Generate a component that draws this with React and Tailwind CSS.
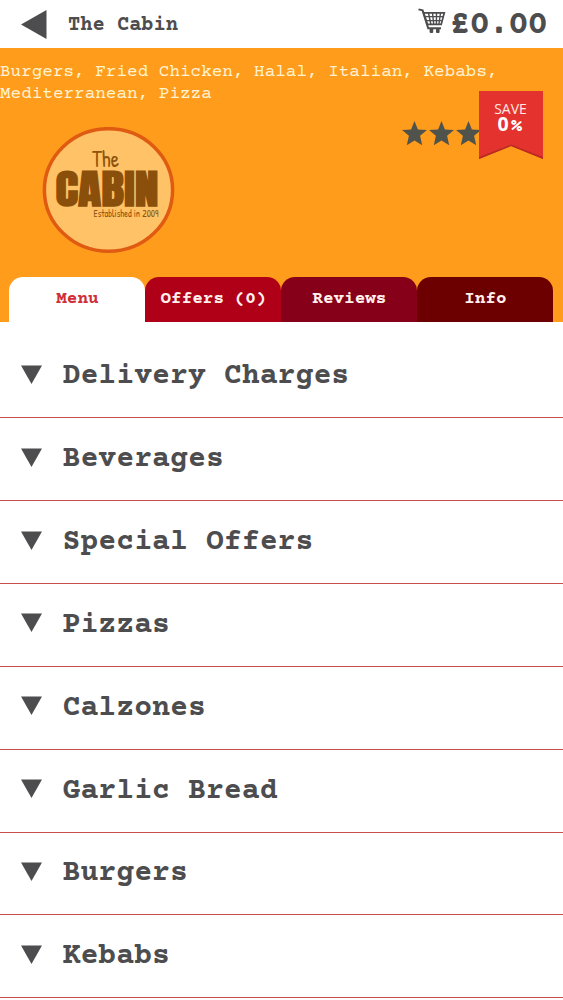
const CATEGORIES = [
  'Delivery Charges',
  'Beverages',
  'Special Offers',
  'Pizzas',
  'Calzones',
  'Garlic Bread',
  'Burgers',
  'Kebabs',
];

const TABS = [
  { label: 'Menu', style: 'bg-white text-[#cf3037]' },
  { label: 'Offers (0)', style: 'bg-[#b00018] text-[#fff0ec]' },
  { label: 'Reviews', style: 'bg-[#870019] text-[#fff0ec]' },
  { label: 'Info', style: 'bg-[#6c0000] text-[#fff0ec]' },
];

function Cart() {
  return (
    <svg className="h-[26px] w-7 shrink-0" viewBox="0 0 28 26" fill="none" stroke="#4d4d4f">
      <path d="M0.5 1.4 L4.6 2.4 L10.2 20.2 H23" strokeWidth="2" />
      <path d="M5.6 4.8 H26.3 L23.2 16.4 H9.4 Z" strokeWidth="1.7" />
      <path d="M7.3 8.6 H25 M8.4 12.6 H23.8 M10.5 5 L13 17 M14.5 5 L15.8 17 M18.5 5 L18.4 17 M22.5 5 L20.8 17" strokeWidth="1.4" />
      <rect x="11.6" y="20.5" width="3.6" height="4.4" rx="1" fill="#4d4d4f" stroke="none" />
      <rect x="18" y="20.5" width="3.6" height="4.4" rx="1" fill="#4d4d4f" stroke="none" />
    </svg>
  );
}

function Star() {
  return (
    <svg className="h-[25px] w-[25px] shrink-0" viewBox="0 0 25 25">
      <path
        d="M12.5 0 L15.9 8.4 L25 9.1 L18.1 14.8 L20.2 24.2 L12.5 19.4 L4.8 24.2 L6.9 14.8 L0 9.1 L9.1 8.4 Z"
        fill="#50534b"
      />
    </svg>
  );
}

function Logo() {
  return (
    <svg className="ml-[42px] mt-[25px] h-[128px] w-[134px]" viewBox="0 0 134 128">
      <ellipse cx="66.5" cy="63" rx="64.1" ry="61.3" fill="#ffc266" stroke="#df5b12" strokeWidth="3.5" />
      <text x="50" y="39.5" textLength="27" lengthAdjust="spacingAndGlyphs" fontFamily="'Patrick Hand', Lato, sans-serif" fontSize="23" fill="#8d540e">The</text>
      <text x="13.5" y="79" textLength="103" lengthAdjust="spacingAndGlyphs" fontFamily="Anton, 'Open Sans', sans-serif" fontWeight="700" fontSize="40" fill="#8a500b">CABIN</text>
      <text x="51.5" y="89.5" textLength="65" lengthAdjust="spacingAndGlyphs" fontFamily="'Patrick Hand', Lato, sans-serif" fontSize="11" fill="#8d540e">Established in 2009</text>
    </svg>
  );
}

function Ribbon() {
  return (
    <div className="absolute right-5 top-[43px] h-[68px] w-16 text-center text-white">
      <svg className="absolute inset-0 h-full w-full" viewBox="0 0 64 68">
        <path d="M0 0 H64 V68 L32 55 L0 68 Z" fill="#e4322e" />
        <path d="M0 68 L32 55 L64 68 V66 L32 53.5 L0 66 Z" fill="#b92b22" />
      </svg>
      <div className="relative pr-px pt-[10px] font-['Open_Sans',sans-serif] text-[14px] leading-[15px] text-[#ffe9e2]">SAVE</div>
      <div className="relative -mt-px pr-0.5 font-['Open_Sans',sans-serif] text-[19.5px] font-bold leading-[17px]">
        0<span className="ml-0.5 font-['Courier_Prime','Liberation_Mono',monospace]">%</span>
      </div>
    </div>
  );
}

export default function App() {
  return (
    <div className="flex h-[1000px] w-[563px] flex-col overflow-hidden bg-white font-['Courier_Prime','Liberation_Mono',monospace] text-[#4d4d4f]">
      <header className="flex h-12 shrink-0 items-center pl-[21px] pr-4">
        <svg className="h-[30px] w-[26px]" viewBox="0 0 26 30">
          <path d="M0 15.5 L25.5 1 V30 Z" fill="#4d4d4f" />
        </svg>
        <h1 className="ml-[21px] pt-1 text-[20.4px] font-bold leading-6">The Cabin</h1>
        <div className="ml-auto flex items-center">
          <div className="-mt-1.5 mr-1">
            <Cart />
          </div>
          <span className="pt-1 text-[34px] font-bold leading-10 tracking-[-1px]">£0.00</span>
        </div>
      </header>

      <section className="relative flex h-[274px] shrink-0 flex-col bg-[#ff9c1b]">
        <p className="h-[54px] w-[510px] pt-[13px] text-[17.67px] leading-[22px] text-[#fff3d2]">
          Burgers, Fried Chicken, Halal, Italian, Kebabs, Mediterranean, Pizza
        </p>
        <Logo />
        <div className="absolute left-[402px] top-[73px] flex gap-[2px]">
          <Star />
          <Star />
          <Star />
        </div>
        <Ribbon />
        <nav className="mt-auto flex h-[45px] pl-[9.4px] pr-[9.6px]">
          {TABS.map((tab) => (
            <button
              key={tab.label}
              className={`flex-1 whitespace-nowrap rounded-t-[14px] pb-px text-[17.67px] font-bold leading-5 ${tab.style}`}
            >
              {tab.label}
            </button>
          ))}
        </nav>
      </section>

      <ul className="flex flex-col pt-[13.5px]">
        {CATEGORIES.map((name) => (
          <li
            key={name}
            className="flex h-[82.85px] shrink-0 items-center border-b-[1.5px] border-[#c64c4e] pb-1 pl-[21px]"
          >
            <svg className="h-[19px] w-[21px]" viewBox="0 0 21 19">
              <path d="M0 0.5 H21 L10.5 19 Z" fill="#4d4d4f" />
            </svg>
            <span className="ml-[20.5px] pt-1.5 text-[29.9px] font-bold leading-9">{name}</span>
          </li>
        ))}
      </ul>
    </div>
  );
}
